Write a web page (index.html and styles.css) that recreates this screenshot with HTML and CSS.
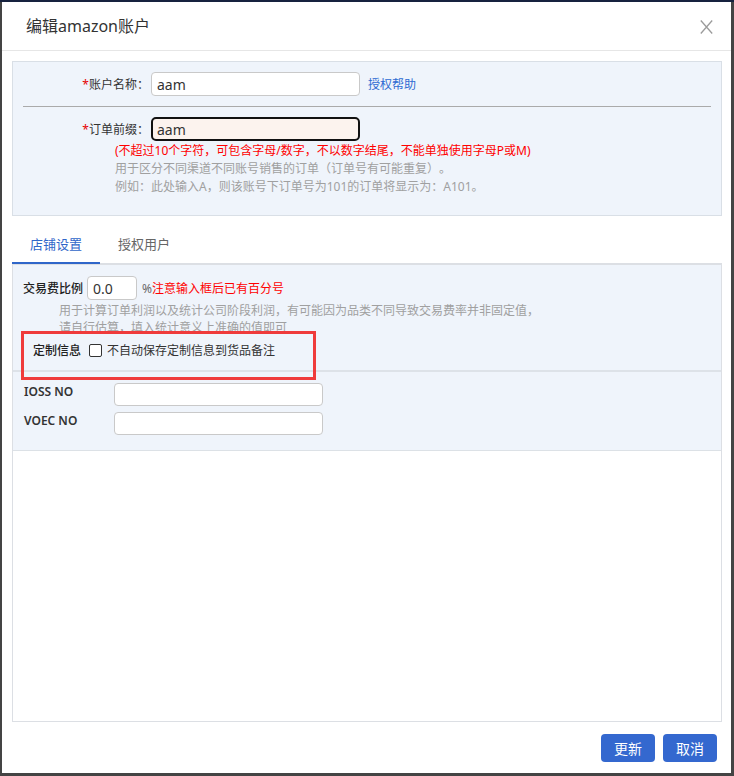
FILE: index.html
```html
<!DOCTYPE html>
<html lang="zh-CN">
<head>
<meta charset="utf-8">
<title>编辑amazon账户</title>
<link rel="stylesheet" href="styles.css">
</head>
<body>
<div class="dialog">
  <div class="dlg-header">
    <h1 class="dlg-title">编辑amazon账户</h1>
    <button class="dlg-close" aria-label="关闭">
      <svg width="13" height="14" viewBox="0 0 13 14"><path d="M0.8 0.5 L12.2 13.5 M12.2 0.5 L0.8 13.5" stroke="#9b9b9b" stroke-width="1.3" fill="none"/></svg>
    </button>
  </div>
  <div class="dlg-body">
    <div class="top-panel">
      <div class="field-row">
        <label class="field-label"><span class="req">*</span>账户名称：</label>
        <input class="text-input" value="aam">
        <a class="help-link">授权帮助</a>
      </div>
      <hr class="divider">
      <div class="field-row">
        <label class="field-label"><span class="req">*</span>订单前缀：</label>
        <input class="text-input focused" value="aam">
      </div>
      <div class="hints">
        <p class="hint-red">(不超过10个字符，可包含字母/数字，不以数字结尾，不能单独使用字母P或M)</p>
        <p class="hint">用于区分不同渠道不同账号销售的订单（订单号有可能重复）。</p>
        <p class="hint">例如：此处输入A，则该账号下订单号为101的订单将显示为：A101。</p>
      </div>
    </div>
    <div class="tabs">
      <div class="tab active">店铺设置</div>
      <div class="tab">授权用户</div>
    </div>
    <div class="tab-panel">
      <div class="section sec-fee">
        <div class="fee-row">
          <span class="strong-label">交易费比例</span>
          <input class="text-input fee-input" value="0.0">
          <span class="pct">%</span><span class="warn">注意输入框后已有百分号</span>
        </div>
        <div class="fee-hint">用于计算订单利润以及统计公司阶段利润，有可能因为品类不同导致交易费率并非固定值，<br>请自行估算，填入统计意义上准确的值即可</div>
        <div class="custom-row">
          <span class="strong-label">定制信息</span>
          <span class="checkbox"></span>
          <span class="check-text">不自动保存定制信息到货品备注</span>
        </div>
        <div class="highlight-box"></div>
      </div>
      <div class="section sec-tax">
        <span class="tax-label">IOSS NO</span>
        <input class="text-input tax-input" value="">
        <span class="tax-label">VOEC NO</span>
        <input class="text-input tax-input" value="">
      </div>
    </div>
  </div>
  <div class="dlg-footer">
    <button class="btn">更新</button>
    <button class="btn">取消</button>
  </div>
</div>
</body>
</html>
```

FILE: styles.css
```css
* { box-sizing: border-box; }
html, body { margin: 0; height: 100%; }
body {
  background: linear-gradient(#16223f 0, #16223f 2px, #444 2px);
  padding: 2px 3px 3px 2px;
  font-family: "Noto Sans", "Noto Sans CJK SC", sans-serif;
  font-size: 12px;
  color: #333;
  overflow: hidden;
  text-spacing-trim: space-all;
}
.dialog {
  width: 729px;
  height: 771px;
  background: #fff;
  display: flex;
  flex-direction: column;
}
.dlg-header {
  flex: none;
  height: 49px;
  border-bottom: 1px solid #e6e6e6;
  display: flex;
  align-items: center;
  justify-content: space-between;
  padding: 0 18px 0 24px;
}
.dlg-title {
  margin: 0;
  font-size: 16px;
  font-weight: normal;
  line-height: 20px;
  color: #333;
}
.dlg-close {
  border: 0;
  background: none;
  padding: 0;
  display: flex;
  margin-top: 1px;
}
.dlg-body {
  flex: 1;
  min-height: 0;
  display: flex;
  flex-direction: column;
  padding: 10px 9px 0 10px;
}
.top-panel {
  flex: none;
  background: #eff4fb;
  border: 1px solid #d9dfe6;
  padding: 10px 0 19px;
}
.field-row {
  display: flex;
  align-items: center;
  height: 24px;
}
.field-label {
  width: 136px;
  margin-right: 2px;
  text-align: right;
  color: #333;
}
.req { color: #e60000; }
.text-input {
  width: 209px;
  height: 24px;
  border: 1px solid #c9c9c9;
  border-radius: 4px;
  padding: 0 5px;
  font-family: "Noto Sans", "Noto Sans CJK SC", sans-serif;
  font-size: 14px;
  color: #333;
  background: #fff;
  outline: none;
}
.text-input.focused {
  border: 2px solid #111;
  border-radius: 5px;
  padding: 0 4px;
  background: #fcf3ee;
}
.help-link {
  margin-left: 8px;
  color: #2d6bd2;
  text-decoration: none;
}
.divider {
  margin: 10px 10px;
  border: 0;
  border-top: 1px solid #aaa;
  height: 0;
}
.hints {
  margin: 1px 0 0 102px;
  line-height: 18px;
}
.hints p { margin: 0; }
.hint-red { color: #f00; }
.hint { color: #a0a0a0; }
.tabs {
  flex: none;
  display: flex;
  position: relative;
  z-index: 1;
  margin-bottom: -1px;
}
.tab {
  padding: 18px 18px 8px;
  line-height: 20px;
  font-size: 13px;
  color: #666;
  border-bottom: 2px solid transparent;
}
.tab.active {
  color: #2f66c9;
  border-bottom-color: #2f66c9;
}
.tab-panel {
  flex: 1;
  background: #fff;
  border: 1px solid #dcdfe4;
  border-top-width: 2px;
}
.section { background: #eff4fb; }
.sec-fee {
  position: relative;
  padding: 11px 0 10px 10px;
  border-bottom: 2px solid #dde2e8;
}
.strong-label {
  font-weight: 500;
  color: #222;
}
.fee-row {
  display: flex;
  align-items: center;
  height: 24px;
}
.fee-input {
  width: 50px;
  margin-left: 4px;
}
.pct {
  margin-left: 5px;
  color: #666;
}
.warn { color: #f00; }
.fee-hint {
  margin: 2px 0 0 36px;
  line-height: 17px;
  color: #a0a0a0;
}
.custom-row {
  display: flex;
  align-items: center;
  height: 20px;
  margin: 4px 0 0 10px;
}
.checkbox {
  width: 13px;
  height: 13px;
  border: 1px solid #333;
  border-radius: 2px;
  background: #fff;
  margin: 0 5px 0 8px;
}
.check-text { color: #333; }
.highlight-box {
  position: absolute;
  left: 8px;
  top: 66px;
  width: 295px;
  height: 49px;
  border: 3px solid #ef3b3b;
}
.sec-tax {
  display: grid;
  grid-template-columns: 90px 209px;
  grid-auto-rows: 23px;
  row-gap: 6px;
  padding: 11px 0 15px 11px;
  border-bottom: 1px solid #dce1e6;
}
.tax-label {
  font-weight: 600;
  color: #333;
  line-height: 18px;
  align-self: start;
}
.tax-input { height: 23px; }
.dlg-footer {
  flex: none;
  height: 51px;
  display: flex;
  justify-content: flex-end;
  align-items: flex-start;
  gap: 8px;
  padding: 12px 14px 0 0;
}
.btn {
  width: 54px;
  height: 28px;
  border: 0;
  border-radius: 4px;
  background: #3468cf;
  color: #fff;
  font-family: "Noto Sans", "Noto Sans CJK SC", sans-serif;
  font-size: 14px;
  padding: 0;
}
```
